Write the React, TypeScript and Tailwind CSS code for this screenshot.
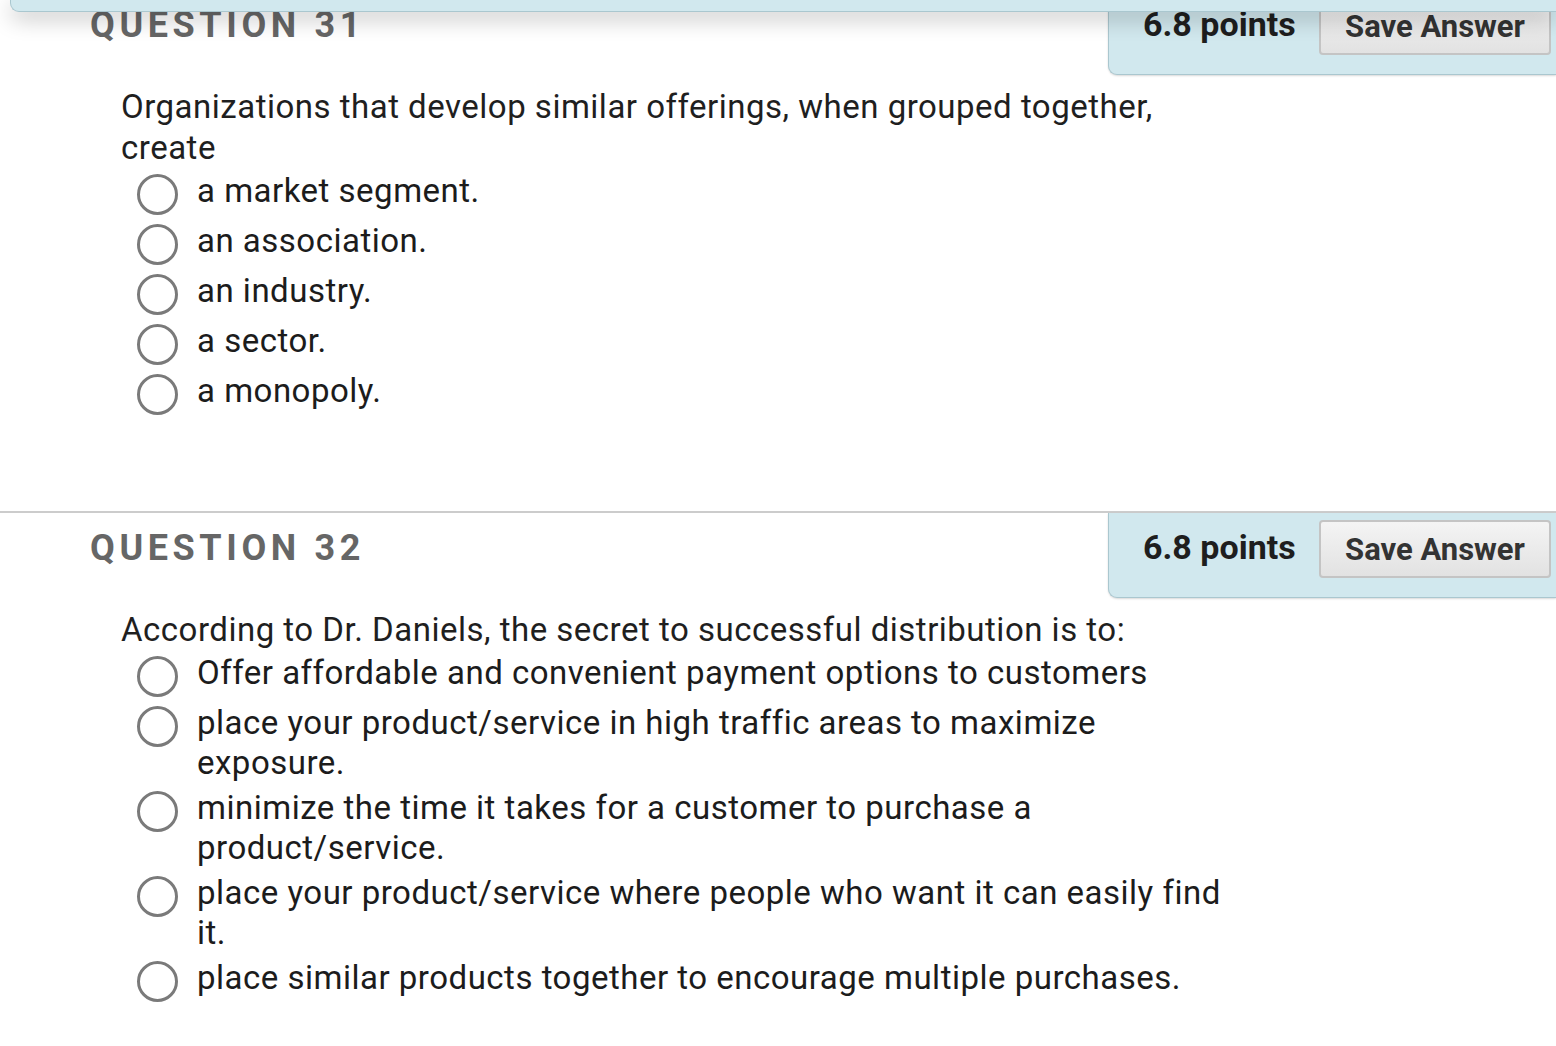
import React from 'react';

interface Question {
  num: number;
  points: string;
  text: string;
  options: string[];
}

const questions: Question[] = [
  {
    num: 31,
    points: '6.8 points',
    text: 'Organizations that develop similar offerings, when grouped together, create',
    options: ['a market segment.', 'an association.', 'an industry.', 'a sector.', 'a monopoly.'],
  },
  {
    num: 32,
    points: '6.8 points',
    text: 'According to Dr. Daniels, the secret to successful distribution is to:',
    options: [
      'Offer affordable and convenient payment options to customers',
      'place your product/service in high traffic areas to maximize exposure.',
      'minimize the time it takes for a customer to purchase a product/service.',
      'place your product/service where people who want it can easily find it.',
      'place similar products together to encourage multiple purchases.',
    ],
  },
];

function Radio() {
  return (
    <span className="mt-[5px] -mb-[1px] block w-[41px] h-[41px] shrink-0 rounded-full border-[3px] border-[#7a7a7a] bg-white" />
  );
}

function QuestionBlock({ q }: { q: Question }) {
  return (
    <section className="border-t-2 border-[#cccccc] h-[523px]">
      <div className="flex items-start justify-between h-[86px]">
        <h3 className="pl-[90px] pt-[15px] text-[36px] leading-[40px] font-bold tracking-[4.6px] text-[#666666]">
          QUESTION {q.num}
        </h3>
        <div className="w-[448px] h-[85px] flex items-start bg-[#d1e8ee] border-l border-b border-[#aac7cf] rounded-bl-[9px] shadow-[0_1px_2px_rgba(0,0,0,0.15)]">
          <span className="pl-[34px] pt-[14px] w-[210px] text-[34px] leading-[40px] font-bold text-[#1e1e1e]">
            {q.points}
          </span>
          <button className="mt-[7px] w-[232px] h-[58px] rounded-[4px] border-2 border-[#c4c4c4] bg-gradient-to-b from-[#f4f4f4] to-[#e2e2e2] text-[31px] font-bold text-[#333333] leading-none">
            Save Answer
          </button>
        </div>
      </div>
      <div className="pl-[121px] pt-[10px] pr-[390px] text-[33px] tracking-[0.5px] leading-[41px] text-[#1f1f1f]">
        {q.text}
      </div>
      <ul className="pl-[137px] pt-[1px] flex flex-col gap-[5px]">
        {q.options.map((o) => (
          <li key={o} className="flex items-start gap-[19px] min-h-[45px]">
            <Radio />
            <span className="max-w-[1030px] text-[33px] tracking-[0.5px] leading-[40px] pt-[2px] -mb-[2px] text-[#1c1c1c]">
              {o}
            </span>
          </li>
        ))}
      </ul>
    </section>
  );
}

export default function App() {
  return (
    <div
      className="relative w-[1556px] h-[1046px] overflow-hidden bg-white"
      style={{ fontFamily: 'Roboto, "Liberation Sans", sans-serif' }}
    >
      <div className="absolute top-0 left-[10px] right-0 h-[12px] bg-[#d1e8ee] border-l border-b border-[#aac7cf] rounded-bl-[9px] shadow-[0_6px_22px_rgba(0,0,0,0.28)] z-10" />
      <div className="-mt-[12px]">
        {questions.map((q) => (
          <QuestionBlock key={q.num} q={q} />
        ))}
      </div>
    </div>
  );
}
